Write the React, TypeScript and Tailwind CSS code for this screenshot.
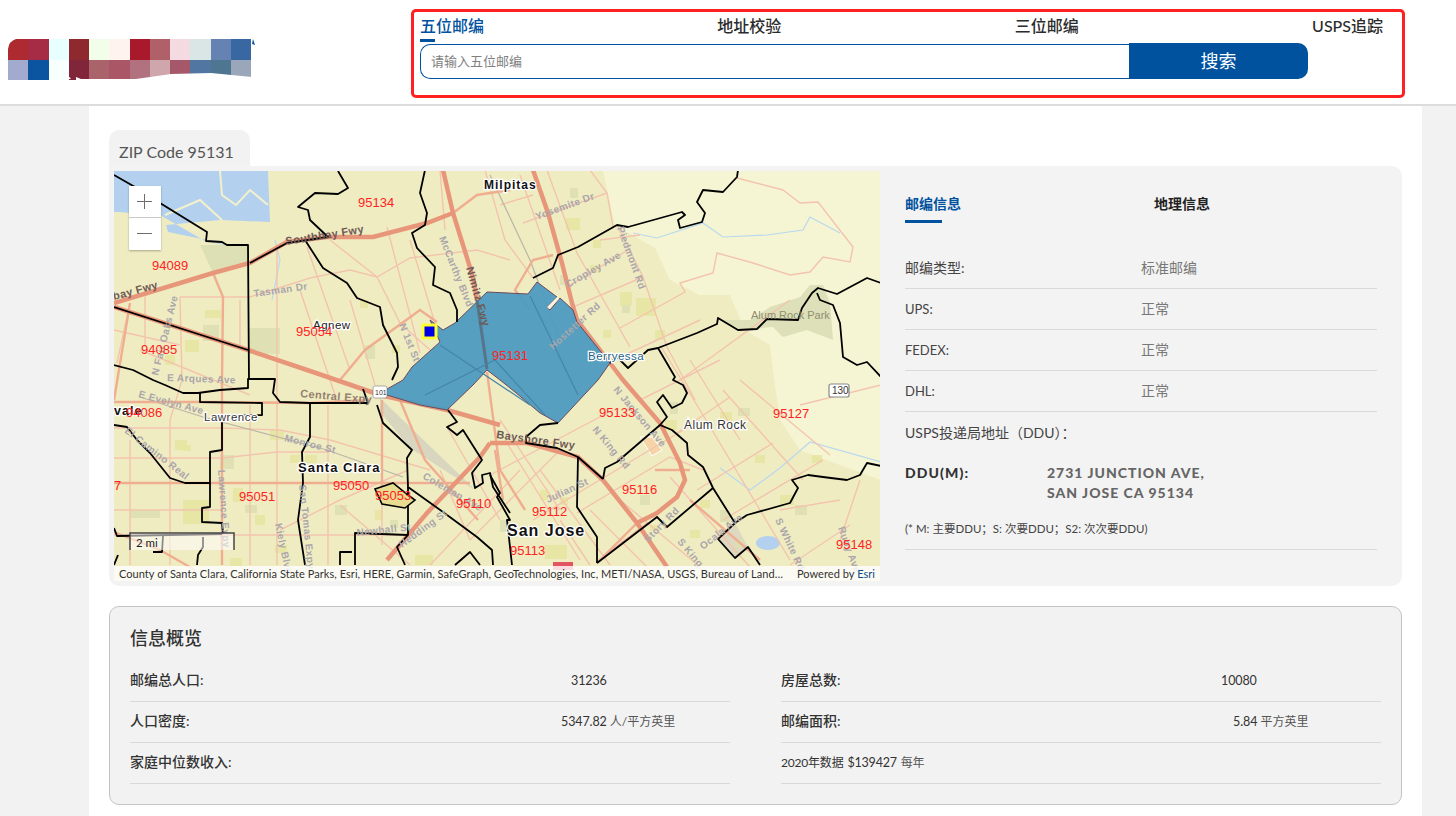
const sans = "font-['Lato','Noto_Sans_CJK_SC',sans-serif]"

const logoColors = [
  ["#ac2a30", "#a62c45", "#e8ffff", "#8e2a2d", "#f1ffea", "#fff3ef", "#a8192b", "#b06068", "#f3dbe1", "#dae6e6", "#6583b2", "#3867a2"],
  ["#a2abce", "#0b54a0", "#f8ffff", "#81253a", "#ab636b", "#ab5667", "#b2717f", "#cfa6ac", "#a55869", "#5076a1", "#4f7690", "#9aa7ba"],
]

const water = "114,171 335,171 268,171 270,222 220,220 166,225 168,232 207,240 227,245 248,245 248,250 233,250 224,245 205,241 160,215 114,212"
const hills = "603,171 615,225 655,248 670,280 700,295 730,295 745,330 770,345 775,385 780,420 800,450 840,465 881,480 881,171"
const park = "720,320 743,330 773,327 783,337 807,330 833,340 830,303 823,285 810,285 800,297 770,307 750,320"
const airport = "380,398 465,480 475,490 410,448 380,412"
const zipArea = "380,393 403,380 412,367 440,342 430,320 443,330 455,323 487,292 528,294 537,282 557,297 547,307 550,310 560,298 573,310 577,322 610,363 598,380 558,423 540,413 515,392 500,380 487,370 473,385 447,410 420,405"

const patches = [
  [203, 325, 16, 16], [185, 340, 14, 12], [165, 355, 10, 10], [250, 328, 30, 26], [205, 310, 16, 8], [392, 345, 8, 8],
  [365, 345, 10, 14], [360, 300, 8, 8], [566, 218, 14, 12], [570, 188, 8, 10], [620, 292, 12, 14], [636, 298, 20, 18],
  [622, 305, 8, 8], [603, 330, 8, 8], [655, 330, 10, 10], [560, 275, 8, 10], [593, 240, 8, 8], [590, 265, 10, 8],
  [670, 402, 8, 12], [720, 412, 12, 10], [665, 420, 12, 10], [738, 408, 12, 8], [755, 455, 10, 8], [780, 495, 14, 10],
  [720, 510, 10, 12], [700, 500, 10, 8], [812, 455, 10, 8], [795, 505, 12, 10], [560, 497, 8, 8], [540, 490, 8, 10],
  [640, 495, 10, 10], [650, 525, 8, 6], [690, 530, 10, 8], [735, 540, 8, 8], [175, 440, 12, 10], [183, 445, 8, 6],
  [220, 455, 14, 14], [270, 430, 14, 10], [305, 455, 12, 8], [245, 505, 12, 8], [233, 488, 10, 14], [183, 500, 26, 24],
  [130, 510, 30, 8], [255, 515, 10, 10], [290, 455, 10, 8], [335, 505, 12, 10], [375, 510, 8, 10], [415, 555, 18, 10],
  [390, 520, 8, 8], [275, 545, 12, 8], [230, 558, 12, 8], [500, 520, 10, 12], [545, 545, 22, 14],
]

const minorStreets = [
  "180,297 182,380 170,420 170,565", "277,250 277,380 277,450 277,565", "328,405 328,565", "382,440 382,545",
  "130,303 117,363", "180,297 250,297 310,278 350,270 377,277 410,258 477,250 510,260",
  "307,247 350,370", "387,227 420,353", "330,240 377,277 400,323 430,350", "140,350 250,395",
  "114,428 222,428 280,430 330,440 430,470", "114,458 222,458 277,452 328,452", "114,535 408,535",
  "280,530 340,500 408,470", "440,170 445,230", "485,170 505,240 533,278", "547,170 577,253 630,347",
  "590,170 607,193 613,227", "617,225 643,277 667,347 695,400", "523,223 607,193", "567,287 628,250",
  "573,307 643,277", "620,328 685,292 680,283 713,273 717,253 753,263 790,275 810,272 823,257 850,262 853,247 818,202 800,203 783,190 737,178",
  "625,355 700,320", "660,345 700,410 790,560", "490,475 613,410", "533,520 700,420", "577,513 670,457 703,470",
  "723,390 803,480", "670,477 750,567", "730,397 677,433", "773,443 697,490", "823,460 723,520", "680,380 790,300",
  "800,405 881,385", "620,500 700,567", "590,510 650,570", "540,470 610,565", "505,440 580,560", "430,565 520,470",
  "470,540 560,450", "447,427 500,520", "500,420 560,510", "850,525 790,565", "860,480 840,540", "780,510 840,500",
  "130,440 130,565", "114,510 222,510", "250,405 250,565", "300,290 335,395", "350,300 375,385", "410,240 440,340",
  "240,300 240,345", "145,290 145,345", "114,330 180,345", "520,175 560,290", "500,205 533,195", "600,240 640,235",
  "640,400 720,360", "690,360 740,440", "740,380 830,455", "560,520 590,565", "440,470 470,540", "340,505 410,565",
]

const freeways = [
  "114,303 213,273 250,263 287,242 327,237 373,237 427,223 453,213",
  "443,170 453,213 473,277 477,300",
  "533,170 548,213 562,263 572,303 577,320 610,363 623,380 660,423 680,463 685,480 677,497 657,513 637,523",
  "637,523 603,480 578,457 527,443 490,443",
  "637,523 667,567",
  "114,307 248,350 313,372 380,395 447,410 500,425",
  "490,443 480,457 427,513 387,560",
]

const arterials = [
  "213,273 223,297 222,380 222,565", "453,213 477,195 510,190", "114,483 382,483 470,483", "114,402 200,402 310,403 370,400",
  "114,532 160,550 195,570", "382,400 382,490", "495,450 503,500", "400,400 425,460 478,520", "530,310 515,290 533,260 553,255",
  "340,380 365,350 420,310 437,322", "655,470 690,470", "597,563 640,520", "487,372 500,470 525,510", "114,400 130,303",
  "648,523 600,560", "690,500 760,560",
]

const boundaries = [
  "114,175 135,187 160,203 207,232 206,241 222,242 227,245 248,245 249,380",
  "114,365 133,370 153,380 165,385 183,393 198,393 220,390 248,388 248,379 275,379 273,393 280,402 310,403 368,403 363,389",
  "250,263 287,243 328,237 310,220 308,210 298,207 315,193 338,194 348,188 338,171",
  "305,240 323,268 347,283 357,298 380,307 383,325 397,353 398,367 392,380",
  "425,170 420,193 427,213 425,225 412,233 417,248 435,267 433,285 450,293 457,310 457,322",
  "533,278 553,268 558,255 578,247 617,225 628,227 682,212 685,215 678,220 680,228 702,222 705,213 697,202 703,190 723,192 737,177 738,170",
  "610,363 617,357 628,368 648,350 658,348 697,333 717,324 718,318 738,330 757,329 767,319 798,320 802,308 812,293 818,288 837,294 867,278 881,283",
  "817,293 820,300 833,305 840,323 843,357 857,365 867,362 881,377",
  "658,348 675,377 673,380 683,385 687,393 682,403 672,408 663,395 657,402 667,417 660,425 617,462 605,468 603,479",
  "660,425 672,430 687,443 688,455 703,467 713,488 735,523 747,515 790,503 798,488 792,480 808,475 823,477 847,480 860,475 867,463 881,466",
  "713,488 667,527 657,517 597,563",
  "735,523 718,539 735,558 748,547 760,565",
  "558,423 540,425 526,437 526,443 557,448 578,457 603,479",
  "578,457 577,507 597,537 597,563",
  "490,475 500,493 497,497 510,520 507,520 512,565",
  "448,410 457,422 447,427 457,435 463,430 482,460 472,473 475,488 483,483 482,475 490,473 493,487 510,513",
  "377,405 383,423 412,450 407,458 408,487 443,512 477,537 492,550 493,565",
  "408,487 408,535 397,547 405,565",
  "408,535 355,533 355,565",
  "310,403 310,437 302,452 303,483 298,520 305,565",
  "222,417 222,450 210,452 210,483 185,483 170,478 150,453 137,440 127,427 114,425",
  "210,483 210,507 202,508 202,522 222,523 223,533",
  "114,528 117,536 222,534",
  "200,393 200,402 262,403 262,415 222,416",
  "153,552 162,552 163,536",
  "197,565 198,555 203,547 203,537",
  "114,307 248,350",
  "114,565 118,555",
  "340,565 340,552 352,552",
  "455,565 470,552 480,565",
]

const zipLabels: [string, number, number][] = [
  ["95134", 358, 207], ["94089", 152, 270], ["95054", 296, 336], ["94085", 141, 354], ["95131", 492, 360],
  ["94086", 126, 417], ["95133", 599, 417], ["95127", 773, 418], ["95051", 239, 501], ["95050", 333, 490],
  ["95053", 375, 500], ["95110", 456, 508], ["95116", 622, 494], ["95112", 532, 516], ["95113", 510, 555],
  ["95148", 836, 549], ["7", 114, 490],
]

const roadLabels: [string, number, number, number, string][] = [
  ["Southbay Fwy", 286, 245, -9, "#6e5a55"], ["bay Fwy", 114, 300, -15, "#6e5a55"], ["Nimitz Fwy", 466, 268, 74, "#6e5a55"],
  ["Central Expy", 300, 397, 5, "#94806f"], ["Bayshore Fwy", 496, 438, 8, "#6e5a55"],
]

const streetLabels: [string, number, number, number][] = [
  ["McCarthy Blvd", 439, 238, 68], ["N 1st St", 399, 325, 68], ["Tasman Dr", 254, 297, -8], ["E Arques Ave", 167, 381, 2],
  ["N Fair Oaks Ave", 158, 376, -76], ["E Evelyn Ave", 138, 397, 15], ["Monroe St", 284, 441, 14], ["Lawrence Expy", 218, 470, 86],
  ["Kiely Blvd", 275, 524, 78], ["San Tomas Expy", 299, 485, 84], ["Newhall St", 357, 536, -6], ["Hedding St", 402, 548, -36],
  ["Coleman Ave", 422, 478, 30], ["El Camino Real", 124, 432, 38], ["Yosemite Dr", 537, 220, -20], ["Piedmont Rd", 617, 228, 70],
  ["Cropley Ave", 568, 288, -30], ["Hostetter Rd", 553, 350, -42], ["N Jackson Ave", 613, 390, 50], ["N King Rd", 592, 430, 50],
  ["Julian St", 548, 503, -25], ["Story Rd", 648, 543, -45], ["S King", 677, 542, 50], ["Ocala Ave", 703, 550, -38],
  ["S White Rd", 775, 520, 65], ["Ruby Ave", 838, 528, 70],
]

const towns: [string, number, number, number, number, string][] = [
  ["Milpitas", 484, 189, 12, 700, "#111"], ["Agnew", 313, 329, 11.5, 400, "#222"], ["Berryessa", 588, 360, 11.5, 400, "#245f86"],
  ["Lawrence", 204, 421, 11.5, 400, "#333"], ["Alum Rock", 684, 429, 12, 400, "#333"], ["Santa Clara", 298, 472, 13, 700, "#111"],
  ["San Jose", 507, 536, 16, 700, "#111"], ["vale", 114, 415, 12.5, 700, "#111"],
]

function ZipMap() {
  return (
    <div className="relative h-[410px] w-[766px] shrink-0 overflow-hidden">
      <svg viewBox="114 171 766 410" width="766" height="410" className="block" fontFamily="'Liberation Sans', Arial, sans-serif">
        <rect x="114" y="171" width="766" height="410" fill="#f0ecc2" />
        <polygon points={hills} fill="#f6f5d3" />
        <polygon points={water} fill="#b3d1ee" />
        <polygon points="114,212 160,215 166,240 114,245" fill="#f0ecc2" />
        <polyline points="220,171 222,195 236,205 250,190 268,205" fill="none" stroke="#f3f0cc" strokeWidth="2" />
        <polyline points="165,215 200,200 222,220" fill="none" stroke="#f3f0cc" strokeWidth="2" />
        <polygon points={park} fill="#dde0b8" />
        <polygon points="227,245 248,245 248,263 213,273 200,245" fill="#dde0b4" />
        <polygon points={airport} fill="#d9d6c0" />
        <polygon points="735,523 718,539 735,558 748,547" fill="#dcd9c0" />
        <polygon points="640,437 652,437 662,450 652,456" fill="#f5d4a8" stroke="#fff" />
        <ellipse cx="768" cy="543" rx="12" ry="7" fill="#b3d1ee" />
        {patches.map(([x, y, w, h], i) => (
          <rect key={i} x={x} y={y} width={w} height={h} fill={i % 3 === 0 ? "#dcdfb2" : "#e6e5a0"} opacity="0.85" />
        ))}
        <polyline points="633,233 657,238 703,223 723,237 767,235 803,230 810,217 840,233" fill="none" stroke="#b8d8ee" strokeWidth="1.2" />
        <polyline points="720,468 750,490 780,468 810,442 881,462" fill="none" stroke="#b8d8ee" strokeWidth="1.2" />
        <polyline points="275,240 280,260 272,300" fill="none" stroke="#b8d8ee" strokeWidth="1.2" />
        {minorStreets.map((p) => (
          <polyline key={p} points={p} fill="none" stroke="#f3c4ad" strokeWidth="1.4" />
        ))}
        <polyline points="140,397 203,417 327,450 403,477" fill="none" stroke="#b9b6a8" strokeWidth="1.2" />
        <polyline points="490,175 530,260 560,340" fill="none" stroke="#b9b6a8" strokeWidth="1.2" />
        {arterials.map((p) => (
          <polyline key={p} points={p} fill="none" stroke="#efae90" strokeWidth="2.4" />
        ))}
        {freeways.map((p) => (
          <polyline key={p} points={p} fill="none" stroke="#e8967a" strokeWidth="4.5" />
        ))}
        <polygon points={zipArea} fill="#4f9bc0" fillOpacity="0.96" stroke="#6d4a5a" strokeWidth="1" />
        <polyline points="477,300 487,369" fill="none" stroke="#56758a" strokeWidth="3" />
        <polyline points="440,345 530,405" fill="none" stroke="#4586a8" strokeWidth="1.2" />
        <polyline points="530,296 578,395" fill="none" stroke="#4586a8" strokeWidth="1.2" />
        <polyline points="425,395 495,360 545,415" fill="none" stroke="#4586a8" strokeWidth="1.2" />
        <polygon points="547,307 557,297 559,299 549,309" fill="#f8f4e0" />
        {boundaries.map((p) => (
          <polyline key={p} points={p} fill="none" stroke="#000" strokeWidth="1.8" strokeLinejoin="round" />
        ))}
        <polygon points="375,489 393,483 408,495 415,500 405,508 382,504" fill="#e8dc90" stroke="#000" strokeWidth="1.6" />
        <rect x="423" y="325" width="13" height="13" fill="#0000e6" stroke="#ffff33" strokeWidth="3" />
        {streetLabels.map(([t, x, y, r]) => (
          <text key={t} x={x} y={y} transform={`rotate(${r} ${x} ${y})`} fontSize="10" fontWeight="700" fill="#aaa6aa" letterSpacing="0.4">{t}</text>
        ))}
        {roadLabels.map(([t, x, y, r, c]) => (
          <text key={t} x={x} y={y} transform={`rotate(${r} ${x} ${y})`} fontSize="11" fontWeight="700" fill={c} letterSpacing="0.4">{t}</text>
        ))}
        <text x="751" y="319" fontSize="11" fill="#8f8f70">Alum Rock Park</text>
        {towns.map(([t, x, y, s, w, c]) => (
          <text key={t} x={x} y={y} fontSize={s} fontWeight={w} fill={c} stroke="#fff" strokeWidth="2.5" letterSpacing={w === 700 ? "1" : "0.5"} style={{ paintOrder: "stroke" }}>{t}</text>
        ))}
        {zipLabels.map(([t, x, y]) => (
          <text key={t} x={x} y={y} fontSize="13" fill="#ff2323">{t}</text>
        ))}
        <rect x="373" y="386" width="14" height="12" rx="2" fill="#fff" stroke="#777" strokeWidth="0.6" />
        <text x="375" y="395" fontSize="7" fill="#333">101</text>
        <rect x="829" y="384" width="20" height="13" rx="2" fill="#fff" stroke="#888" strokeWidth="1.2" />
        <text x="832" y="394" fontSize="10" fill="#333">130</text>
        <rect x="553" y="562" width="20" height="8" fill="#e0555f" />
        <rect x="130" y="533" width="104" height="17" fill="#fff" fillOpacity="0.55" />
        <polyline points="130,550 130,533 234,533 234,550" fill="none" stroke="#444" strokeWidth="1.5" />
        <text x="136" y="547" fontSize="11.5" fill="#222" fontFamily="Lato, sans-serif">2 mi</text>
      </svg>

      <div className="absolute left-[15px] top-[15px] flex w-[32px] flex-col bg-white shadow-[0_1px_2px_rgba(0,0,0,0.3)]">
        <div className="relative h-[32px] border-b border-[#c8c8c8]">
          <div className="absolute left-[8px] top-[15px] h-px w-[15px] bg-[#6e6e6e]" />
          <div className="absolute left-[15px] top-[8px] h-[15px] w-px bg-[#6e6e6e]" />
        </div>
        <div className="relative h-[32px]">
          <div className="absolute left-[8px] top-[15px] h-px w-[15px] bg-[#6e6e6e]" />
        </div>
      </div>

      <div className={`absolute bottom-0 left-0 flex h-[15px] w-full items-center justify-between bg-white/80 px-[5px] text-[11px] leading-none tracking-[0.05px] text-[#323232] ${sans}`}>
        <span>County of Santa Clara, California State Parks, Esri, HERE, Garmin, SafeGraph, GeoTechnologies, Inc, METI/NASA, USGS, Bureau of Land…</span>
        <span>Powered by <span className="text-[#0a4a8a]">Esri</span></span>
      </div>
    </div>
  )
}

const infoRows = [
  { label: "UPS:", value: "正常" },
  { label: "FEDEX:", value: "正常" },
  { label: "DHL:", value: "正常" },
]

function InfoColumn() {
  return (
    <div className={`ml-[25px] w-[472px] text-[14px] ${sans}`}>
      <div className="flex h-[51px] items-start pt-[24px] font-bold leading-[18px]">
        <div className="relative w-[249px] text-[#00529f]">
          邮编信息
          <div className="absolute left-0 top-[25px] h-[3px] w-[37px] bg-[#00529f]" />
        </div>
        <div className="text-[#222]">地理信息</div>
      </div>
      <div className="box-content flex h-[41px] items-center border-b border-[#d9d9d9] pt-[25px] text-[#444]">
        <span className="w-[236px]">邮编类型:</span>
        <span className="text-[#777]">标准邮编</span>
      </div>
      {infoRows.map((r) => (
        <div key={r.label} className="flex h-[41px] items-center border-b border-[#d9d9d9] text-[#444]">
          <span className="w-[236px] pt-[2px] text-[13px]">{r.label}</span>
          <span className="pb-[2px] text-[#777]">{r.value}</span>
        </div>
      ))}
      <div className="flex h-[41px] items-center text-[#444]">USPS投递局地址（DDU）：</div>
      <div className="mt-[10px] flex text-[14px] font-black leading-[20px] tracking-[1.1px]">
        <span className="w-[142px] text-[#333]">DDU(M):</span>
        <span className="text-[#666] tracking-[1px]">
          2731 JUNCTION AVE,
          <br />
          SAN JOSE CA 95134
        </span>
      </div>
      <div className="mt-[17px] border-b border-[#d9d9d9] pb-[11px] text-[11.5px] leading-[18px] text-[#444]">
        (* M: 主要DDU；S: 次要DDU；S2: 次次要DDU)
      </div>
    </div>
  )
}

function StatRow({ label, children, offset }: { label: string; children?: React.ReactNode; offset: string }) {
  return (
    <div className="flex h-[41px] items-center border-b border-[#d9d9d9]">
      <span className="w-[200px] shrink-0 pb-[4px] text-[14px] font-medium text-[#333]">{label}</span>
      <span className={`whitespace-nowrap text-[12.5px] tracking-[-0.1px] ${offset}`}>{children}</span>
    </div>
  )
}

export default function App() {
  return (
    <div className={`h-[816px] overflow-hidden bg-[#f2f2f2] ${sans}`}>
      <header className="flex h-[106px] border-b-2 border-[#dcdcdc] bg-white">
        <svg width="252" height="50" viewBox="0 0 252 50" className="mt-[33px] ml-[6px] w-[252px] shrink-0" shapeRendering="crispEdges">
          {logoColors.map((row, r) =>
            row.map((c, i) => <rect key={`${r}-${i}`} x={2 + i * 20.25} y={6 + r * 21} width="20.5" height={r === 0 ? 21 : 20} fill={c} />)
          )}
          <path d="M2 6 L10 6 Q3 8 2 16 Z M70 44 L75 46 L80 46 L130 46 L165 41 L205 40 L246 44 L246 50 L70 50 Z M60 40 L65 46 L60 46 Z" fill="#fff" shapeRendering="auto" />
          <path d="M247 6 L249 12 L246 11 Z" fill="#0b54a0" shapeRendering="auto" />
        </svg>
        <div className="ml-[153px] mt-[9px] h-[89px] w-[994px] rounded-[5px] border-[3px] border-[#ff2121] pl-[6px] pr-[19px]">
          <nav className="flex h-[27px] items-center justify-between text-[16px] font-medium leading-[27px] text-[#2b2b2b]">
            <span className="relative text-[#00529f]">
              五位邮编
              <span className="absolute bottom-[-3px] left-0 h-[3px] w-[15px] bg-[#00529f]" />
            </span>
            <span>地址校验</span>
            <span>三位邮编</span>
            <span>USPS追踪</span>
          </nav>
          <div className="mt-[4px] flex w-[888px] items-stretch">
            <div className="mt-[1px] flex h-[35px] w-[709px] items-center rounded-l-[10px] border border-r-0 border-[#00529f] pl-[10px] text-[13px] text-[#808080]">
              请输入五位邮编
            </div>
            <button className="h-[36px] flex-1 rounded-r-[10px] bg-[#00529f] text-[18px] text-white">搜索</button>
          </div>
        </div>
      </header>

      <main className="ml-[89px] h-[710px] w-[1333px] bg-white px-[20px] pt-[24px]">
        <div className="flex h-[36px] w-[141px] items-center rounded-t-[10px] bg-[#f2f2f2] pl-[10px] pt-[8px] text-[16px] text-[#555]">
          ZIP Code 95131
        </div>
        <section className="flex h-[420px] rounded-b-[10px] rounded-tr-[10px] bg-[#f3f3f3] pl-[5px] pt-[5px]">
          <ZipMap />
          <InfoColumn />
        </section>
        <section className="mt-[20px] h-[199px] rounded-[10px] border border-[#c4c4c4] bg-[#f2f2f2] px-[20px] pt-[19px] text-[13px] text-[#333]">
          <h2 className="h-[24px] text-[18px] font-medium leading-[24px] text-[#333]">信息概览</h2>
          <div className="mt-[11px] flex gap-[51px]">
            <div className="w-[600px] shrink-0">
              <StatRow label="邮编总人口:" offset="ml-[241px]">31236</StatRow>
              <StatRow label="人口密度:" offset="ml-[231px]">5347.82 <span className="text-[12px] tracking-normal text-[#555]">人/平方英里</span></StatRow>
              <StatRow label="家庭中位数收入:" offset="" />
            </div>
            <div className="w-[600px] shrink-0">
              <StatRow label="房屋总数:" offset="ml-[240px]">10080</StatRow>
              <StatRow label="邮编面积:" offset="ml-[252px]">5.84 <span className="text-[12px] tracking-normal text-[#555]">平方英里</span></StatRow>
              <div className="flex h-[41px] items-center border-b border-[#d9d9d9] text-[12px] tracking-[-0.2px]">
                2020年数据 <span className="ml-1 text-[12.5px]">$139427</span> <span className="ml-1 text-[#555]">每年</span>
              </div>
            </div>
          </div>
        </section>
      </main>
    </div>
  )
}
